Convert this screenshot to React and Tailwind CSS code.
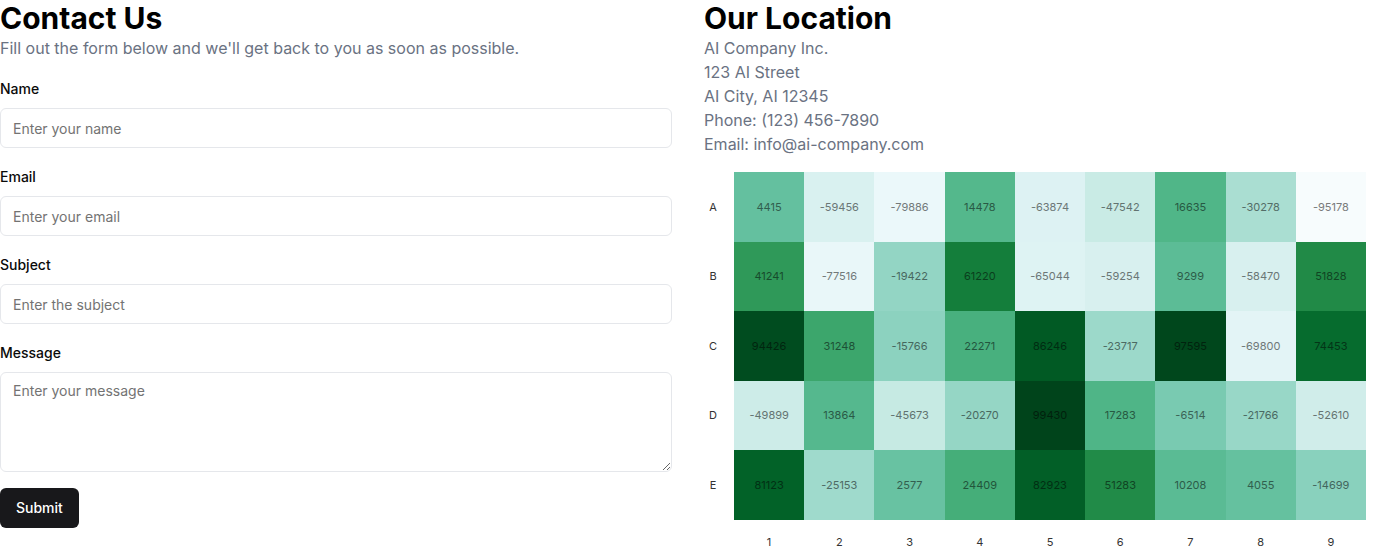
import React from 'react';

// BuGn scheme (d3), interpolated with a basis spline like d3.interpolateBuGn
const BUGN = ['#f7fcfd', '#e5f5f9', '#ccece6', '#99d8c9', '#66c2a4', '#41ae76', '#238b45', '#006d2c', '#00441b'];

const hexToRgb = (hex) => [1, 3, 5].map(i => parseInt(hex.slice(i, i + 2), 16));

const basis = (t1, v0, v1, v2, v3) => {
  const t2 = t1 * t1, t3 = t2 * t1;
  return ((1 - 3 * t1 + 3 * t2 - t3) * v0
    + (4 - 6 * t2 + 3 * t3) * v1
    + (1 + 3 * t1 + 3 * t2 - 3 * t3) * v2
    + t3 * v3) / 6;
};

const interpolateBuGn = (t) => {
  const rgbs = BUGN.map(hexToRgb);
  const n = rgbs.length - 1;
  let i;
  if (t <= 0) { t = 0; i = 0; } else if (t >= 1) { t = 1; i = n - 1; } else i = Math.floor(t * n);
  return [0, 1, 2].map(c => {
    const v1 = rgbs[i][c], v2 = rgbs[i + 1][c];
    const v0 = i > 0 ? rgbs[i - 1][c] : 2 * v1 - v2;
    const v3 = i < n - 1 ? rgbs[i + 2][c] : 2 * v2 - v1;
    return Math.round(Math.max(0, Math.min(255, basis((t - i / n) * n, v0, v1, v2, v3))));
  });
};

const rows = [
  { id: 'A', values: [4415, -59456, -79886, 14478, -63874, -47542, 16635, -30278, -95178] },
  { id: 'B', values: [41241, -77516, -19422, 61220, -65044, -59254, 9299, -58470, 51828] },
  { id: 'C', values: [94426, 31248, -15766, 22271, 86246, -23717, 97595, -69800, 74453] },
  { id: 'D', values: [-49899, 13864, -45673, -20270, 99430, 17283, -6514, -21766, -52610] },
  { id: 'E', values: [81123, -25153, 2577, 24409, 82923, 51283, 10208, 4055, -14699] },
];

const allValues = rows.flatMap(r => r.values);
const minV = Math.min(...allValues);
const maxV = Math.max(...allValues);

const Field = ({ label, placeholder, textarea }) => (
  <div>
    <label className="block text-sm leading-6 font-medium text-neutral-950 pt-[1px] mb-[7px]">{label}</label>
    {textarea ? (
      <textarea
        placeholder={placeholder}
        className="block w-full h-[100px] rounded-md border border-gray-200 px-3 py-2 text-sm leading-5 placeholder:text-neutral-500 outline-none"
      />
    ) : (
      <input
        placeholder={placeholder}
        className="block w-full h-10 rounded-md border border-gray-200 px-3 text-sm placeholder:text-neutral-500 outline-none"
      />
    )}
  </div>
);

const HeatMap = () => (
  <div className="mt-4 text-[11px]" style={{ fontFamily: 'Inter, sans-serif' }}>
    {rows.map(row => (
      <div key={row.id} className="flex h-[69.6px]">
        <div className="w-[30px] flex items-center">
          <span className="w-[18px] text-center text-[#333]">{row.id}</span>
        </div>
        <div className="flex-1 grid grid-cols-9 mr-[10px]">
          {row.values.map((v, i) => {
            const [r, g, b] = interpolateBuGn((v - minV) / (maxV - minV));
            const k = 0.49;
            return (
              <div
                key={i}
                className="flex items-center justify-center"
                style={{
                  backgroundColor: `rgb(${r},${g},${b})`,
                  color: `rgb(${Math.round(r * k)},${Math.round(g * k)},${Math.round(b * k)})`,
                }}
              >
                {v}
              </div>
            );
          })}
        </div>
      </div>
    ))}
    <div className="flex mt-[15px] leading-[14px]">
      <div className="w-[30px]" />
      <div className="flex-1 grid grid-cols-9 mr-[10px] text-[#333]">
        {[1, 2, 3, 4, 5, 6, 7, 8, 9].map(n => (
          <div key={n} className="text-center">{n}</div>
        ))}
      </div>
    </div>
  </div>
);

const App = () => (
  <div className="grid grid-cols-2 gap-8 bg-white text-black" style={{ fontFamily: 'Inter, "Liberation Sans", sans-serif' }}>
    {/* Contact form */}
    <div>
      <h2 className="text-3xl font-bold">Contact Us</h2>
      <p className="text-base text-gray-500">Fill out the form below and we'll get back to you as soon as possible.</p>
      <form className="mt-4 space-y-4" onSubmit={e => e.preventDefault()}>
        <Field label="Name" placeholder="Enter your name" />
        <Field label="Email" placeholder="Enter your email" />
        <Field label="Subject" placeholder="Enter the subject" />
        <Field label="Message" placeholder="Enter your message" textarea />
        <button type="submit" className="h-10 px-4 rounded-md bg-zinc-900 text-white text-sm font-medium">
          Submit
        </button>
      </form>
    </div>

    {/* Location */}
    <div>
      <h2 className="text-3xl font-bold">Our Location</h2>
      <div className="text-base text-gray-500">
        <p>AI Company Inc.</p>
        <p>123 AI Street</p>
        <p>AI City, AI 12345</p>
        <p>Phone: (123) 456-7890</p>
        <p>Email: info@ai-company.com</p>
      </div>
      <HeatMap />
    </div>
  </div>
);

export default App;
